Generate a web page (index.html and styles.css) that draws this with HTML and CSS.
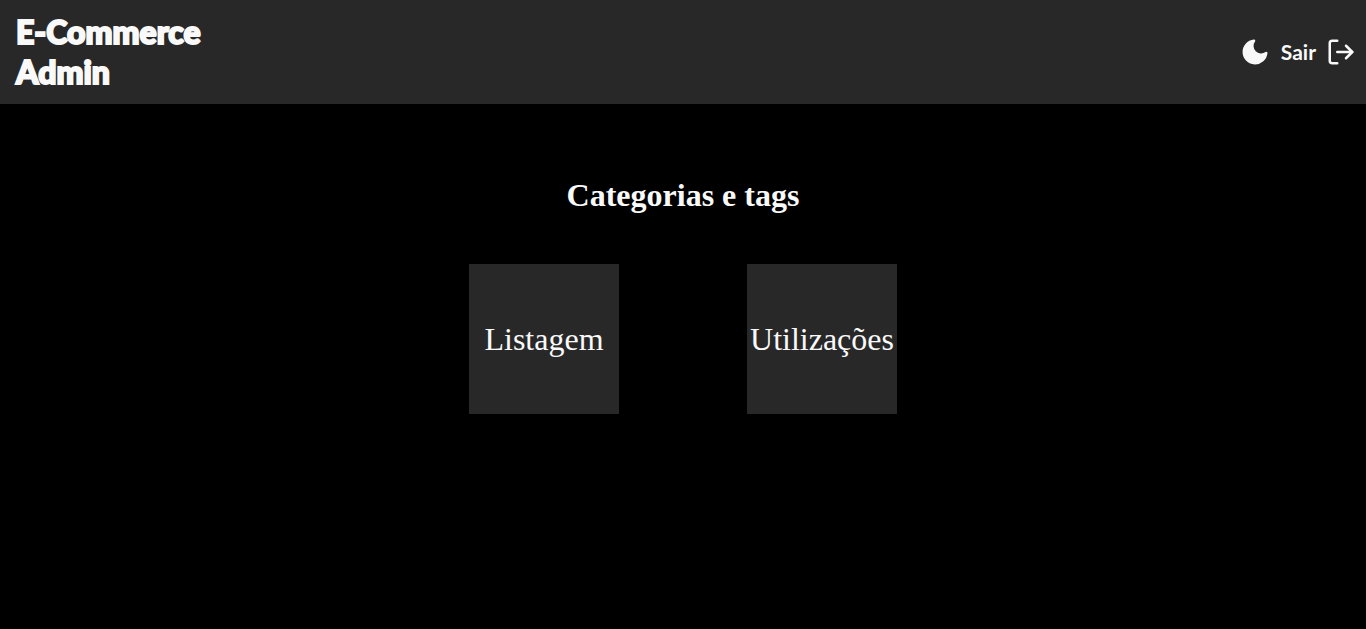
FILE: index.html
```
<!DOCTYPE html>
<html lang="pt-BR">
<head>
<meta charset="utf-8">
<meta name="viewport" content="width=device-width, initial-scale=1">
<title>E-Commerce Admin</title>
<link rel="stylesheet" href="styles.css">
</head>
<body>
<header class="topbar">
  <a class="brand" href="#">E-Commerce<br>Admin</a>
  <div class="actions">
    <button class="theme" type="button" aria-label="Alternar tema">
      <svg class="icon" viewBox="0 0 24 24" fill="currentColor" stroke="currentColor" stroke-width="2" stroke-linecap="round" stroke-linejoin="round" aria-hidden="true"><path d="M21 12.79A9 9 0 1 1 11.21 3 7 7 0 0 0 21 12.79z"/></svg>
    </button>
    <button class="logout" type="button">
      Sair
      <svg class="icon" viewBox="0 0 24 24" fill="none" stroke="currentColor" stroke-width="2" stroke-linecap="round" stroke-linejoin="round" aria-hidden="true"><path d="M9 21H5a2 2 0 0 1-2-2V5a2 2 0 0 1 2-2h4"/><path d="M16 17l5-5-5-5"/><path d="M21 12H9"/></svg>
    </button>
  </div>
</header>
<main class="content">
  <h1 class="title">Categorias e tags</h1>
  <nav class="cards">
    <a class="card" href="#">Listagem</a>
    <a class="card" href="#">Utilizações</a>
  </nav>
</main>
</body>
</html>
```
FILE: styles.css
```
* { box-sizing: border-box; }
body {
  margin: 0;
  background: #000;
  color: #f9f9f9;
  font-family: "Liberation Serif", "Times New Roman", serif;
}
.topbar {
  display: flex;
  align-items: center;
  justify-content: space-between;
  padding: 12px 10px 12px 16px;
  background: #282828;
}
.brand {
  color: inherit;
  font: 900 32px/40px Lato, sans-serif;
  -webkit-text-stroke: 2px currentColor;
  text-decoration: none;
}
.actions {
  display: flex;
  align-items: center;
  gap: 11px;
}
.theme, .logout {
  display: flex;
  align-items: center;
  gap: 10px;
  padding: 0;
  border: 0;
  background: none;
  color: inherit;
  font: 700 21px/30px Lato, sans-serif;
  cursor: pointer;
}
.icon {
  width: 30px;
  height: 30px;
}
.content {
  display: flex;
  flex-direction: column;
  align-items: center;
  gap: 50px;
  padding: 72px 16px;
}
.title {
  margin: 0;
  font-size: 32px;
  line-height: 38px;
}
.cards {
  display: flex;
  flex-wrap: wrap;
  justify-content: center;
  gap: 128px;
}
.card {
  display: flex;
  align-items: center;
  justify-content: center;
  width: 150px;
  height: 150px;
  background: #282828;
  color: inherit;
  font-size: 32px;
  text-decoration: none;
}
```
